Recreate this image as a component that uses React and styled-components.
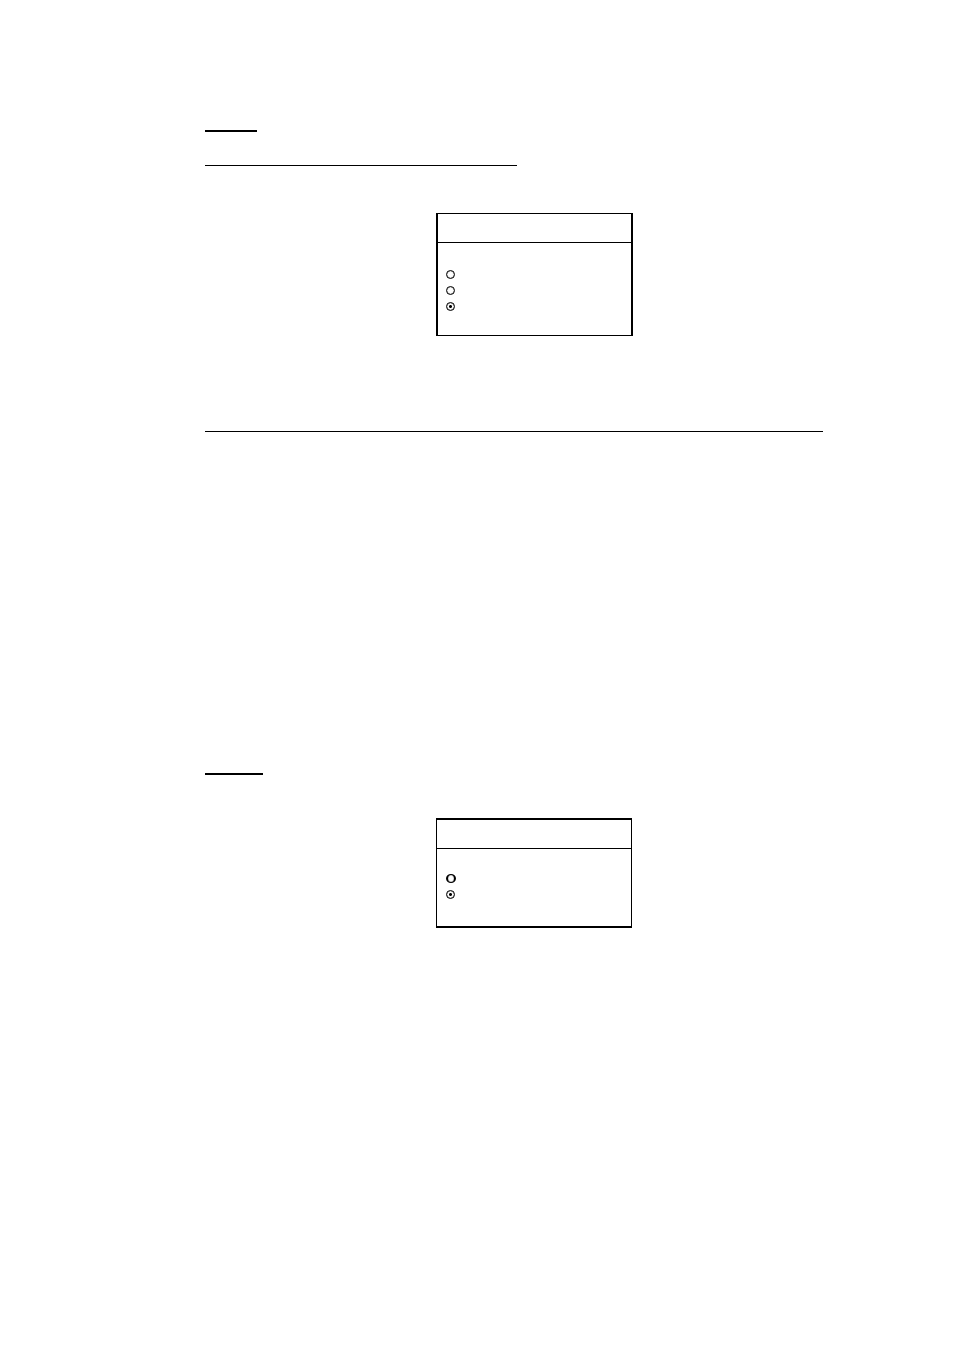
import React, {useState} from 'react';
import styled, {createGlobalStyle} from 'styled-components';

const ink = "#000000";
const paper = "#ffffff";

const GlobalStyle = createGlobalStyle`
  body {
    margin: 0;
    background-color: ${paper};
    font-family: "Liberation Sans", sans-serif;
  }
`;

const Page = styled.main`
  display: flex;
  flex-direction: column;
  box-sizing: border-box;
  padding: 130px 131px 40px 205px;
`;

const Section = styled.section`
  display: flex;
  flex-direction: column;
  margin-bottom: ${props => props.$space || 0}px;
`;

const Rule = styled.hr`
  box-sizing: border-box;
  width: ${props => props.$width || '100%'};
  max-width: 100%;
  height: ${props => props.$bold ? 2 : 1}px;
  margin: 0 0 ${props => props.$space || 0}px;
  border: 0;
  background-color: ${ink};
`;

const Panel = styled.form`
  box-sizing: border-box;
  width: ${props => props.$width}px;
  margin-left: 231px;
  border: solid ${ink};
  border-width: ${props => props.$edges};
`;

const PanelHeader = styled.header`
  height: 28px;
  border-bottom: 1px solid ${ink};
`;

const Options = styled.div`
  display: flex;
  flex-direction: column;
  padding: ${props => props.$pad};
`;

const Option = styled.label`
  display: flex;
  align-items: flex-start;
  height: 16px;
`;

const Radio = styled.input`
  appearance: none;
  box-sizing: border-box;
  flex: none;
  width: ${props => props.$heavy ? 10 : 9}px;
  height: 9px;
  margin: 0;
  border: solid ${ink};
  border-width: ${props => props.$heavy ? '1px 2px' : '1px'};
  border-radius: 50%;
  background-color: ${paper};
  box-shadow: inset 0 0 1px ${ink};
  &:checked {
    background-image: radial-gradient(circle, ${ink} 1px, transparent 2px);
  }
`;

const mainOptions = [
    {value: 'first'},
    {value: 'second'},
    {value: 'third'}
];

const shortOptions = [
    {value: 'first', heavy: true},
    {value: 'second'}
];

function RadioPanel({name, options, initial, width, edges, pad}) {
    const [selected, setSelected] = useState(initial);

    return (
        <Panel $width={width} $edges={edges}>
            <PanelHeader />
            <Options role="radiogroup" $pad={pad}>
                {options.map(item =>
                    <Option key={item.value} htmlFor={`${name}-${item.value}`}>
                        <Radio
                            type="radio"
                            id={`${name}-${item.value}`}
                            name={name}
                            value={item.value}
                            aria-label={item.value}
                            $heavy={item.heavy}
                            checked={selected === item.value}
                            onChange={() => setSelected(item.value)}
                        />
                    </Option>
                )}
            </Options>
        </Panel>
    );
}

function App() {
    return (
        <>
            <GlobalStyle />
            <Page>
                <Section $space={95}>
                    <Rule $width="52px" $bold $space={33} />
                    <Rule $width="312px" $space={47} />
                    <RadioPanel
                        name="main"
                        options={mainOptions}
                        initial="third"
                        width={197}
                        edges="1px 2px"
                        pad="27px 8px 17px"
                    />
                </Section>
                <Section $space={341}>
                    <Rule />
                </Section>
                <Section>
                    <Rule $width="58px" $bold $space={43} />
                    <RadioPanel
                        name="short"
                        options={shortOptions}
                        initial="second"
                        width={196}
                        edges="2px 1px"
                        pad="25px 9px 20px"
                    />
                </Section>
            </Page>
        </>
    );
}

export default App;
